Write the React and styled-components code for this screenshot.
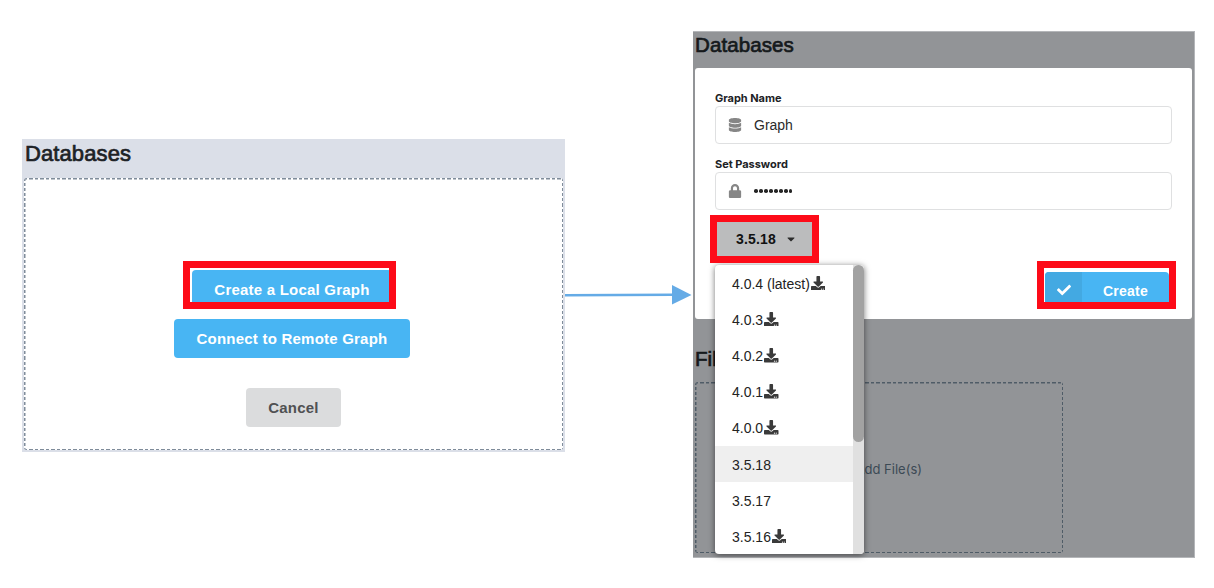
import React from "react";
import styled, { createGlobalStyle, css } from "styled-components";
import { FaCaretDown, FaCheck, FaDatabase, FaDownload, FaLock } from "react-icons/fa";

const GlobalStyle = createGlobalStyle`
  *, *::before, *::after { box-sizing: border-box; }
  body {
    margin: 0;
    background: #fff;
    font-family: "Liberation Sans", Arial, sans-serif;
    color: #1e2226;
  }
`;

const dashed = (color) => css`
  border-radius: 3px;
  background-image:
    repeating-linear-gradient(90deg, ${color} 0 3.3px, transparent 3.3px 5.5px),
    repeating-linear-gradient(90deg, ${color} 0 3.3px, transparent 3.3px 5.5px),
    repeating-linear-gradient(180deg, ${color} 0 3.1px, transparent 3.1px 5.1px),
    repeating-linear-gradient(180deg, ${color} 0 3.1px, transparent 3.1px 5.1px);
  background-position: top, bottom, left, right;
  background-size: 100% 1.5px, 100% 1.5px, 1.5px 100%, 1.5px 100%;
  background-repeat: no-repeat;
`;

const Stage = styled.main`
  display: flex;
  align-items: flex-start;
  width: 1214px;
  height: 588px;
  padding-left: 22px;
  overflow: hidden;
`;

const StartPanel = styled.section`
  width: 543px;
  height: 313px;
  margin-top: 139px;
  padding: 0 2px 2px;
  background: #dbdfe8;
`;

const Heading = styled.h2`
  margin: 0;
  height: ${(p) => p.$height}px;
  padding-left: ${(p) => p.$indent}px;
  font-size: ${(p) => p.$size}px;
  line-height: ${(p) => p.$line}px;
  font-weight: 400;
  letter-spacing: 0.1px;
  color: ${(p) => p.$color};
  -webkit-text-stroke: 0.7px ${(p) => p.$color};
`;

const StartBox = styled.div`
  display: flex;
  flex-direction: column;
  align-items: center;
  height: 272px;
  padding-top: 92px;
  background-color: #fff;
  ${dashed("#7f8c9a")}
`;

const Button = styled.button`
  display: flex;
  align-items: center;
  justify-content: center;
  width: ${(p) => p.$width}px;
  height: 39px;
  margin: ${(p) => p.$margin || "0"};
  padding: 0;
  border: 0;
  border-radius: 4px;
  background: ${(p) => (p.$muted ? "#dbdcdd" : "#48b5f3")};
  color: ${(p) => (p.$muted ? "#505152" : "#fff")};
  font: 700 15px "Liberation Sans", Arial, sans-serif;
  letter-spacing: 0.22px;
`;

const Marked = styled.div`
  position: relative;
  width: ${(p) => p.$width}px;
  height: 39px;
  margin-right: 3px;
`;

const RedFrame = styled.span`
  position: absolute;
  z-index: 3;
  top: ${(p) => p.$top}px;
  left: ${(p) => p.$left}px;
  width: ${(p) => p.$width}px;
  height: 48px;
  border: 7px solid #fd0b18;
  pointer-events: none;
`;

const Arrow = styled.svg`
  display: block;
  flex: none;
  width: 128px;
  height: 20px;
  margin-top: 285px;
`;

const FormPanel = styled.section`
  width: 502px;
  height: 527px;
  margin-top: 31px;
  padding: 0 2px;
  background: #929497;
  border: solid #b4b6b9;
  border-width: 1px 1px 1px 0;
`;

const Dialog = styled.form`
  height: 251px;
  padding: 23px 20px 0;
  border-radius: 3px;
  background: #fff;
`;

const Label = styled.label`
  display: block;
  height: 15px;
  font: 700 11px/15px Inter, sans-serif;
  letter-spacing: -0.03px;
  color: #202225;
`;

const Field = styled.div`
  display: flex;
  align-items: center;
  height: 38px;
  margin-bottom: 13px;
  padding-left: 12px;
  border: 1px solid #dfe0e1;
  border-radius: 4px;
  font-size: 14px;
  color: #2b2b2b;

  svg {
    width: 14px;
    height: 14px;
    margin-right: 12px;
    color: #868686;
  }
`;

const Dots = styled.span`
  display: flex;
  gap: 1.4px;

  i {
    width: 3.6px;
    height: 3.6px;
    border-radius: 50%;
    background: #252525;
  }
`;

const Actions = styled.div`
  display: flex;
  justify-content: space-between;
  align-items: flex-start;
`;

const VersionPicker = styled.div`
  position: relative;
  width: 99px;
  height: 36px;
  margin-top: -1px;
`;

const VersionButton = styled.button`
  display: flex;
  align-items: center;
  width: 97px;
  height: 36px;
  padding: 0 0 2px 21px;
  border: 0;
  background: #bbbcbd;
  font: 700 14px "Liberation Sans", Arial, sans-serif;
  letter-spacing: 0.15px;
  color: #111;

  svg {
    width: 12px;
    height: 12px;
    margin-left: 9px;
    color: #2c2c2c;
  }
`;

const Menu = styled.div`
  position: absolute;
  z-index: 2;
  top: 43px;
  left: 0;
  display: flex;
  width: 149px;
  height: 289px;
  border-radius: 4px;
  overflow: hidden;
  background: #fff;
  box-shadow: 0 1px 6px rgba(0, 0, 0, 0.55);
`;

const Options = styled.ul`
  flex: 1;
  margin: 0;
  padding: 0;
  list-style: none;
`;

const Option = styled.li`
  display: flex;
  align-items: center;
  height: 36.12px;
  padding: 2px 0 0 17px;
  background: ${(p) => (p.$selected ? "#efefef" : "transparent")};
  font-size: 14px;
  color: #232323;

  svg {
    flex: none;
    width: 14.5px;
    height: 14.5px;
    margin: -2px 0 0 1px;
    color: #3a3a3a;
  }
`;

const Track = styled.div`
  width: 11px;
  background: #e0e0e0;
`;

const Thumb = styled.div`
  height: 177px;
  border-radius: 6px;
  background: #a2a2a2;
`;

const CreateButton = styled.button`
  display: flex;
  align-items: stretch;
  width: 124px;
  height: 36px;
  padding: 0;
  border: 0;
  border-radius: 4px;
  overflow: hidden;
  background: #48b5f3;
  color: #fff;
  font: 700 14px "Liberation Sans", Arial, sans-serif;
  letter-spacing: 0.25px;
`;

const CreateIcon = styled.span`
  display: flex;
  align-items: center;
  justify-content: center;
  width: 37px;
  background: #43a9e2;

  svg {
    width: 14px;
    height: 14px;
  }
`;

const CreateText = styled.span`
  flex: 1;
  line-height: 38px;
`;

const CreateSlot = styled.div`
  position: relative;
  margin: 49px 3px 0 0;
`;

const FileBox = styled.div`
  display: flex;
  align-items: center;
  justify-content: flex-end;
  width: 368px;
  height: 171px;
  padding: 2px 141px 0 0;
  font: 400 13px Inter, sans-serif;
  color: #3c4a55;
  ${dashed("#4f5c67")}
`;

const versions = [
  { name: "4.0.4 (latest)", remote: true },
  { name: "4.0.3", remote: true },
  { name: "4.0.2", remote: true },
  { name: "4.0.1", remote: true },
  { name: "4.0.0", remote: true },
  { name: "3.5.18", selected: true },
  { name: "3.5.17" },
  { name: "3.5.16", remote: true },
];

function VersionMenu() {
  return (
    <Menu>
      <Options>
        {versions.map((v) => (
          <Option key={v.name} $selected={v.selected}>
            {v.name}
            {v.remote && <FaDownload />}
          </Option>
        ))}
      </Options>
      <Track>
        <Thumb />
      </Track>
    </Menu>
  );
}

export default function App() {
  return (
    <>
      <GlobalStyle />
      <Stage>
        <StartPanel>
          <Heading $height={39} $line={30} $size={22} $indent={1} $color="#1d2226">
            Databases
          </Heading>
          <StartBox>
            <Marked $width={200}>
              <Button $width={200}>Create a Local Graph</Button>
              <RedFrame $top={-9} $left={-9} $width={213} />
            </Marked>
            <Button $width={236} $margin="10px 3px 0 0">
              Connect to Remote Graph
            </Button>
            <Button $muted $width={95} $margin="30px 0 0">
              Cancel
            </Button>
          </StartBox>
        </StartPanel>

        <Arrow viewBox="0 0 128 20">
          <path d="M0 10.3 L108 9.8" stroke="#65abe6" strokeWidth="2.6" />
          <path d="M107 0 L126.500 10 L107 19.500 Z" fill="#65abe6" />
        </Arrow>

        <FormPanel>
          <Heading $height={36} $line={25} $size={20.5} $indent={0} $color="#15191c">
            Databases
          </Heading>
          <Dialog onSubmit={(e) => e.preventDefault()}>
            <Label>Graph Name</Label>
            <Field>
              <FaDatabase />
              Graph
            </Field>
            <Label>Set Password</Label>
            <Field>
              <FaLock />
              <Dots>
                {Array.from({ length: 8 }, (_, i) => (
                  <i key={i} />
                ))}
              </Dots>
            </Field>
            <Actions>
              <VersionPicker>
                <VersionButton type="button">
                  3.5.18
                  <FaCaretDown />
                </VersionButton>
                <RedFrame $top={-7} $left={-5} $width={109} />
                <VersionMenu />
              </VersionPicker>
              <CreateSlot>
                <CreateButton type="submit">
                  <CreateIcon>
                    <FaCheck />
                  </CreateIcon>
                  <CreateText>Create</CreateText>
                </CreateButton>
                <RedFrame $top={-11} $left={-8} $width={139} />
              </CreateSlot>
            </Actions>
          </Dialog>
          <Heading $height={63} $line={79} $size={20.5} $indent={0} $color="#15191c">
            Files
          </Heading>
          <FileBox>Add File(s)</FileBox>
        </FormPanel>
      </Stage>
    </>
  );
}
